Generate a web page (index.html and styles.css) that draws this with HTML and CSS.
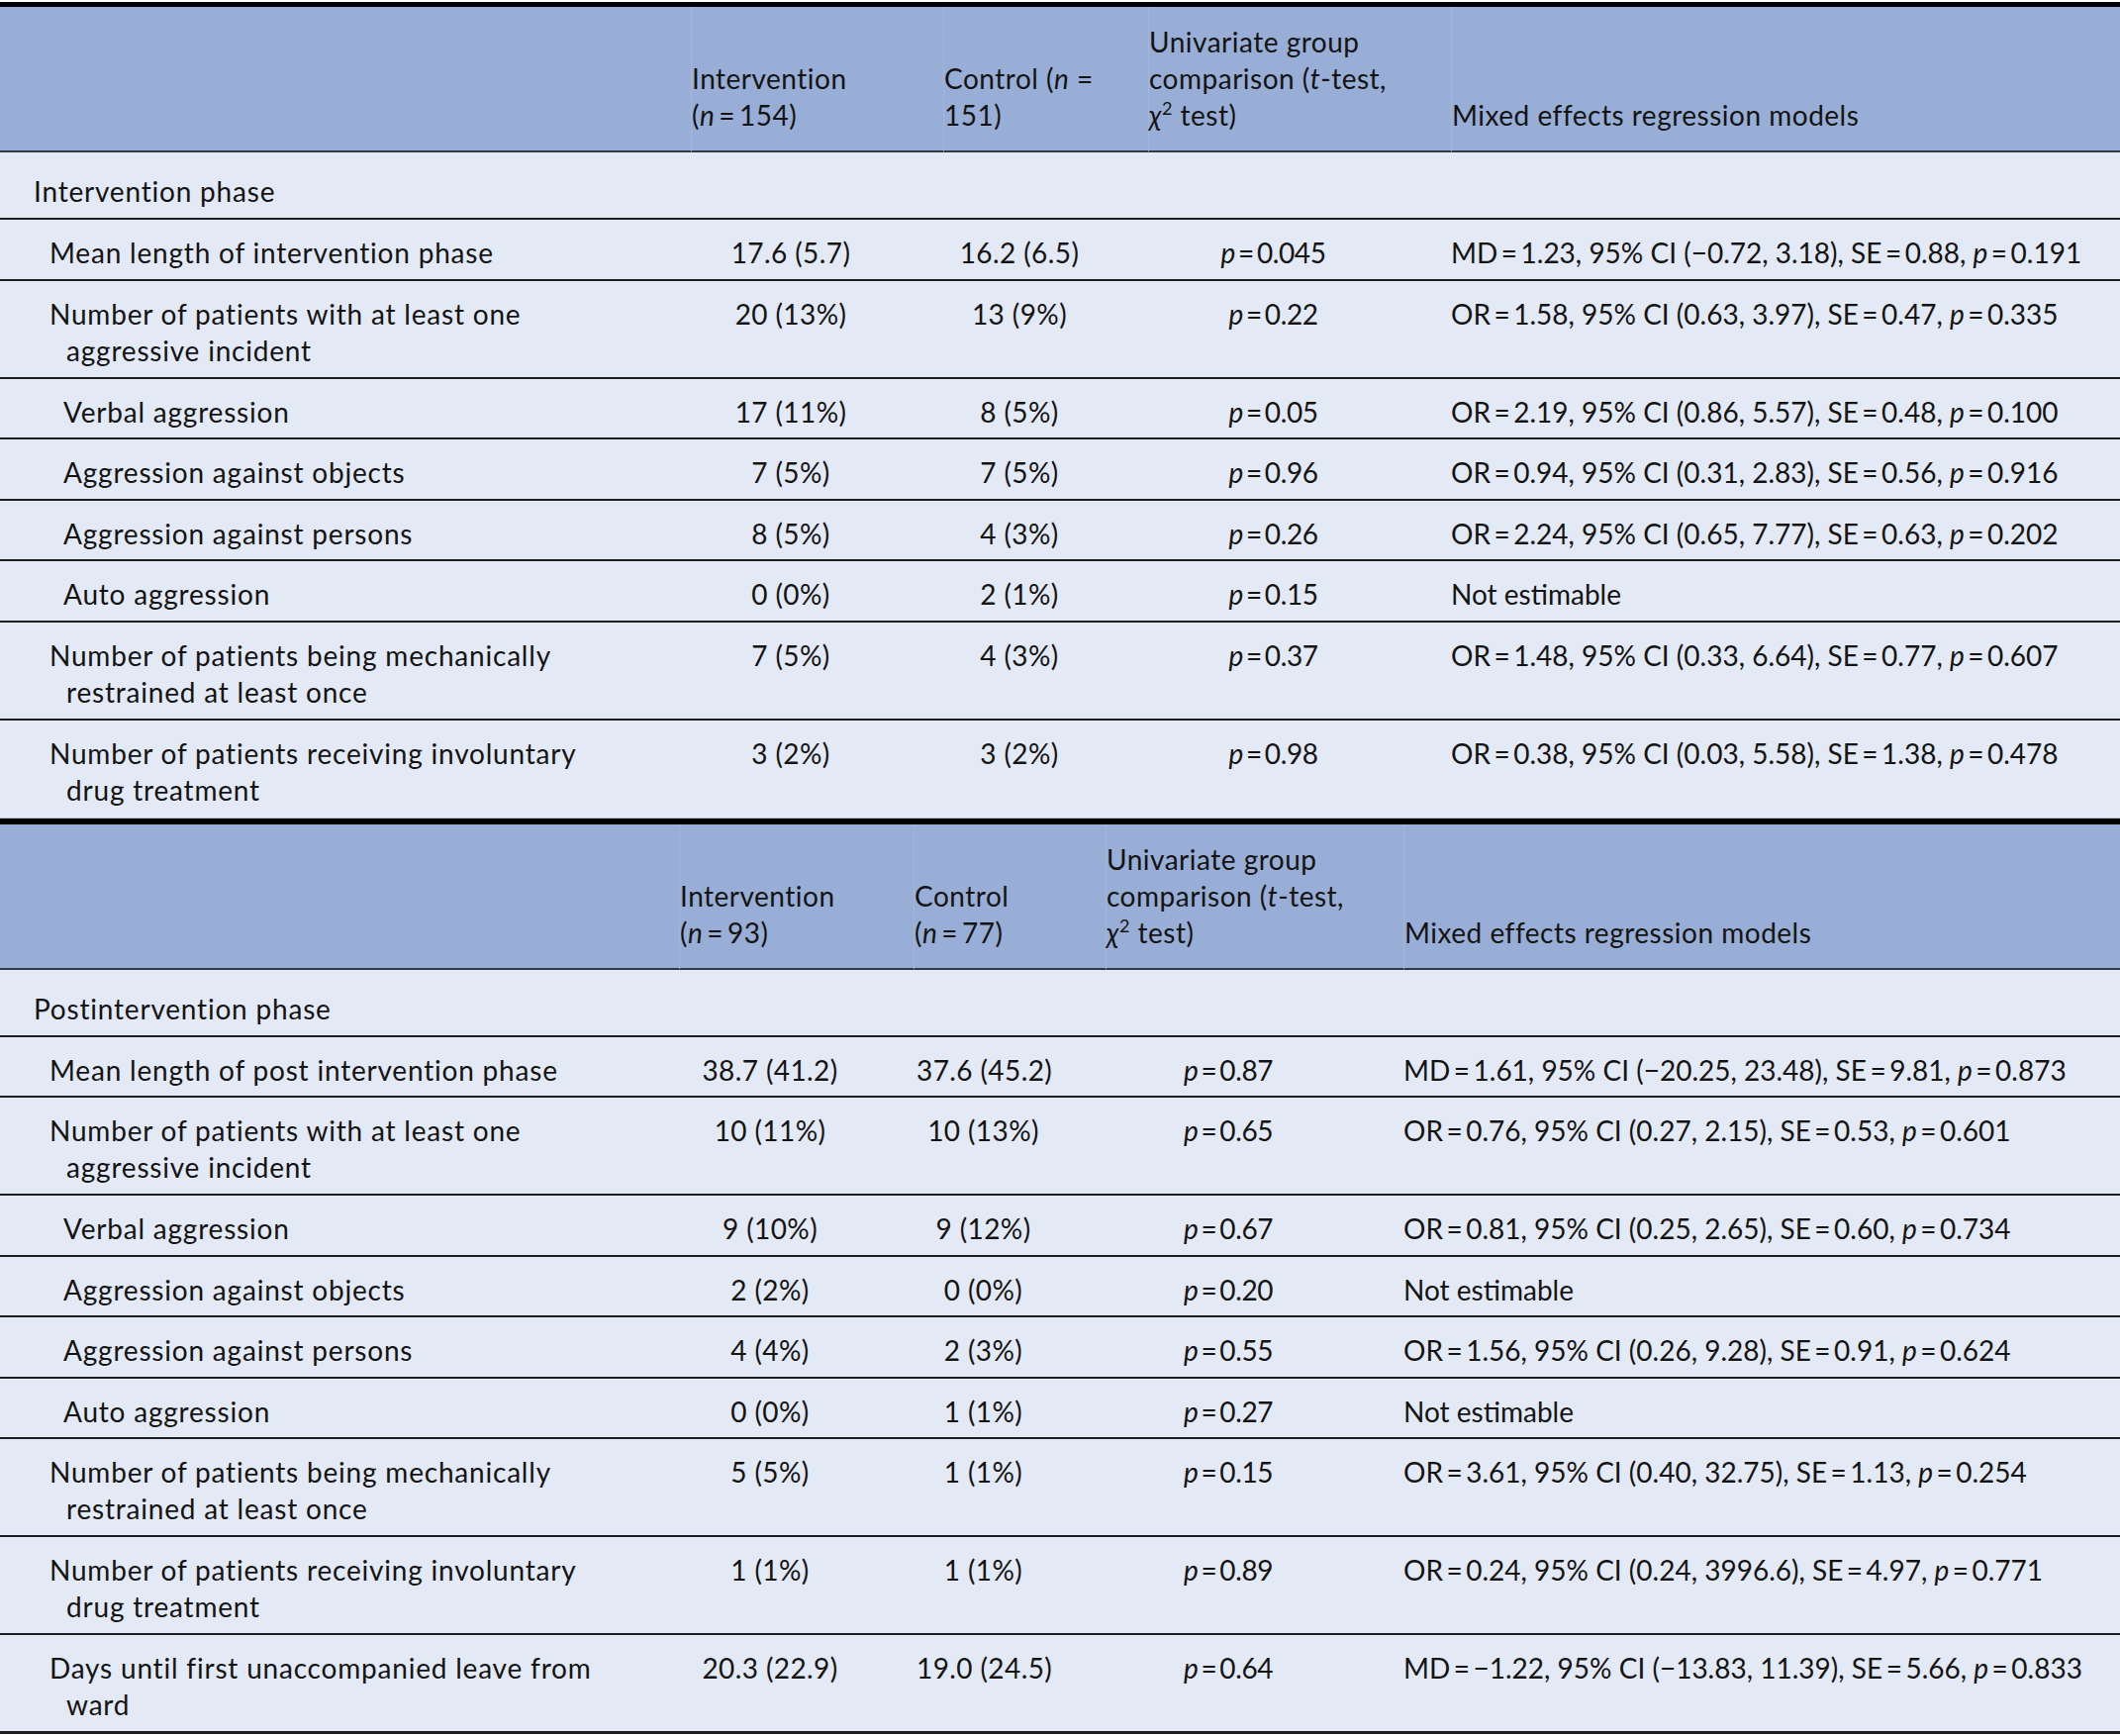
FILE: index.html
```html
<!DOCTYPE html>
<html>
<head>
<meta charset="utf-8">
<link rel="stylesheet" href="styles.css">
</head>
<body>
<div class="page">
<table class="results t1">
  <colgroup>
    <col class="c-label1"><col class="c-int1"><col class="c-ctl1"><col class="c-uni1"><col class="c-mix1">
  </colgroup>
  <thead>
    <tr>
      <th></th>
      <th>Intervention<br>(<i>n</i>&thinsp;=&thinsp;154)</th>
      <th>Control (<i>n</i> =<br>151)</th>
      <th>Univariate group<br>comparison (<i>t</i>-test,<br><i>χ</i><sup>2</sup> test)</th>
      <th>Mixed effects regression models</th>
    </tr>
  </thead>
  <tbody>
    <tr class="section"><td class="lab-sec">Intervention phase</td><td></td><td></td><td></td><td></td></tr>
    <tr><td class="lab">Mean length of intervention phase</td><td class="num">17.6 (5.7)</td><td class="num">16.2 (6.5)</td><td class="num pv"><i>p</i>&thinsp;=&thinsp;0.045</td><td class="mix">MD&thinsp;=&thinsp;1.23, 95% CI (−0.72, 3.18), SE&thinsp;=&thinsp;0.88, <i>p</i>&thinsp;=&thinsp;0.191</td></tr>
    <tr class="two"><td class="lab">Number of patients with at least one<br>aggressive incident</td><td class="num">20 (13%)</td><td class="num">13 (9%)</td><td class="num pv"><i>p</i>&thinsp;=&thinsp;0.22</td><td class="mix">OR&thinsp;=&thinsp;1.58, 95% CI (0.63, 3.97), SE&thinsp;=&thinsp;0.47, <i>p</i>&thinsp;=&thinsp;0.335</td></tr>
    <tr><td class="lab-sub">Verbal aggression</td><td class="num">17 (11%)</td><td class="num">8 (5%)</td><td class="num pv"><i>p</i>&thinsp;=&thinsp;0.05</td><td class="mix">OR&thinsp;=&thinsp;2.19, 95% CI (0.86, 5.57), SE&thinsp;=&thinsp;0.48, <i>p</i>&thinsp;=&thinsp;0.100</td></tr>
    <tr><td class="lab-sub">Aggression against objects</td><td class="num">7 (5%)</td><td class="num">7 (5%)</td><td class="num pv"><i>p</i>&thinsp;=&thinsp;0.96</td><td class="mix">OR&thinsp;=&thinsp;0.94, 95% CI (0.31, 2.83), SE&thinsp;=&thinsp;0.56, <i>p</i>&thinsp;=&thinsp;0.916</td></tr>
    <tr><td class="lab-sub">Aggression against persons</td><td class="num">8 (5%)</td><td class="num">4 (3%)</td><td class="num pv"><i>p</i>&thinsp;=&thinsp;0.26</td><td class="mix">OR&thinsp;=&thinsp;2.24, 95% CI (0.65, 7.77), SE&thinsp;=&thinsp;0.63, <i>p</i>&thinsp;=&thinsp;0.202</td></tr>
    <tr><td class="lab-sub">Auto aggression</td><td class="num">0 (0%)</td><td class="num">2 (1%)</td><td class="num pv"><i>p</i>&thinsp;=&thinsp;0.15</td><td class="mix">Not estimable</td></tr>
    <tr class="two"><td class="lab">Number of patients being mechanically<br>restrained at least once</td><td class="num">7 (5%)</td><td class="num">4 (3%)</td><td class="num pv"><i>p</i>&thinsp;=&thinsp;0.37</td><td class="mix">OR&thinsp;=&thinsp;1.48, 95% CI (0.33, 6.64), SE&thinsp;=&thinsp;0.77, <i>p</i>&thinsp;=&thinsp;0.607</td></tr>
    <tr class="two last"><td class="lab">Number of patients receiving involuntary<br>drug treatment</td><td class="num">3 (2%)</td><td class="num">3 (2%)</td><td class="num pv"><i>p</i>&thinsp;=&thinsp;0.98</td><td class="mix">OR&thinsp;=&thinsp;0.38, 95% CI (0.03, 5.58), SE&thinsp;=&thinsp;1.38, <i>p</i>&thinsp;=&thinsp;0.478</td></tr>
  </tbody>
</table>
<table class="results t2">
  <colgroup>
    <col class="c-label2"><col class="c-int2"><col class="c-ctl2"><col class="c-uni2"><col class="c-mix2">
  </colgroup>
  <thead>
    <tr>
      <th></th>
      <th>Intervention<br>(<i>n</i>&thinsp;=&thinsp;93)</th>
      <th>Control<br>(<i>n</i>&thinsp;=&thinsp;77)</th>
      <th>Univariate group<br>comparison (<i>t</i>-test,<br><i>χ</i><sup>2</sup> test)</th>
      <th>Mixed effects regression models</th>
    </tr>
  </thead>
  <tbody>
    <tr class="section"><td class="lab-sec">Postintervention phase</td><td></td><td></td><td></td><td></td></tr>
    <tr><td class="lab">Mean length of post intervention phase</td><td class="num">38.7 (41.2)</td><td class="num">37.6 (45.2)</td><td class="num pv"><i>p</i>&thinsp;=&thinsp;0.87</td><td class="mix">MD&thinsp;=&thinsp;1.61, 95% CI (−20.25, 23.48), SE&thinsp;=&thinsp;9.81, <i>p</i>&thinsp;=&thinsp;0.873</td></tr>
    <tr class="two"><td class="lab">Number of patients with at least one<br>aggressive incident</td><td class="num">10 (11%)</td><td class="num">10 (13%)</td><td class="num pv"><i>p</i>&thinsp;=&thinsp;0.65</td><td class="mix">OR&thinsp;=&thinsp;0.76, 95% CI (0.27, 2.15), SE&thinsp;=&thinsp;0.53, <i>p</i>&thinsp;=&thinsp;0.601</td></tr>
    <tr><td class="lab-sub">Verbal aggression</td><td class="num">9 (10%)</td><td class="num">9 (12%)</td><td class="num pv"><i>p</i>&thinsp;=&thinsp;0.67</td><td class="mix">OR&thinsp;=&thinsp;0.81, 95% CI (0.25, 2.65), SE&thinsp;=&thinsp;0.60, <i>p</i>&thinsp;=&thinsp;0.734</td></tr>
    <tr><td class="lab-sub">Aggression against objects</td><td class="num">2 (2%)</td><td class="num">0 (0%)</td><td class="num pv"><i>p</i>&thinsp;=&thinsp;0.20</td><td class="mix">Not estimable</td></tr>
    <tr><td class="lab-sub">Aggression against persons</td><td class="num">4 (4%)</td><td class="num">2 (3%)</td><td class="num pv"><i>p</i>&thinsp;=&thinsp;0.55</td><td class="mix">OR&thinsp;=&thinsp;1.56, 95% CI (0.26, 9.28), SE&thinsp;=&thinsp;0.91, <i>p</i>&thinsp;=&thinsp;0.624</td></tr>
    <tr><td class="lab-sub">Auto aggression</td><td class="num">0 (0%)</td><td class="num">1 (1%)</td><td class="num pv"><i>p</i>&thinsp;=&thinsp;0.27</td><td class="mix">Not estimable</td></tr>
    <tr class="two"><td class="lab">Number of patients being mechanically<br>restrained at least once</td><td class="num">5 (5%)</td><td class="num">1 (1%)</td><td class="num pv"><i>p</i>&thinsp;=&thinsp;0.15</td><td class="mix">OR&thinsp;=&thinsp;3.61, 95% CI (0.40, 32.75), SE&thinsp;=&thinsp;1.13, <i>p</i>&thinsp;=&thinsp;0.254</td></tr>
    <tr class="two"><td class="lab">Number of patients receiving involuntary<br>drug treatment</td><td class="num">1 (1%)</td><td class="num">1 (1%)</td><td class="num pv"><i>p</i>&thinsp;=&thinsp;0.89</td><td class="mix">OR&thinsp;=&thinsp;0.24, 95% CI (0.24, 3996.6), SE&thinsp;=&thinsp;4.97, <i>p</i>&thinsp;=&thinsp;0.771</td></tr>
    <tr class="two final"><td class="lab">Days until first unaccompanied leave from<br>ward</td><td class="num">20.3 (22.9)</td><td class="num">19.0 (24.5)</td><td class="num pv"><i>p</i>&thinsp;=&thinsp;0.64</td><td class="mix">MD&thinsp;=&thinsp;−1.22, 95% CI (−13.83, 11.39), SE&thinsp;=&thinsp;5.66, <i>p</i>&thinsp;=&thinsp;0.833</td></tr>
  </tbody>
</table>
</div>
</body>
</html>
```

FILE: styles.css
```css
html, body {
  margin: 0;
  padding: 0;
  background: #ffffff;
}
.page {
  padding-top: 2px;
  width: 2142px;
}
.results {
  width: 2142px;
  table-layout: fixed;
  border-collapse: separate;
  border-spacing: 0;
  font-family: Lato, "Noto Sans", sans-serif;
  font-size: 28px;
  line-height: 37px;
  color: #141414;
  background: #e3e9f5;
}
.t1 { border-top: 5px solid #000; }
.t2 { border-top: 6px solid #000; }

.c-label1 { width: 698px; }
.c-int1 { width: 255px; }
.c-ctl1 { width: 207px; }
.c-uni1 { width: 306px; }
.c-mix1 { width: 676px; }
.c-label2 { width: 686px; }
.c-int2 { width: 237px; }
.c-ctl2 { width: 194px; }
.c-uni2 { width: 301px; }
.c-mix2 { width: 724px; }

.results th {
  background: #98aed6;
  font-weight: normal;
  text-align: left;
  vertical-align: bottom;
  white-space: nowrap;
  letter-spacing: 0.5px;
  padding: 17px 4px 17px 0;
  border-bottom: 2px solid #2f3947;
  border-left: 1px solid #a3b7dd;
}
.results th:first-child { border-left: none; }
.results sup {
  font-size: 18px;
  line-height: 0;
  vertical-align: 11px;
}
.results td {
  vertical-align: top;
  white-space: nowrap;
  padding: 15px 4px 7.5px 0;
  border-bottom: 2px solid #1d1d1d;
}
.results tr.two td { padding-bottom: 8px; }
.results tr.section td {
  padding-top: 21px;
  padding-bottom: 8px;
}
.results tr.last td { border-bottom: 1px solid #b9c1cf; padding-bottom: 9px; }
.results tr.final td { border-bottom: 3px solid #1d1d1d; }

.lab-sec { padding-left: 34px !important; letter-spacing: 0.8px; }
.lab { padding-left: 67px !important; text-indent: -17px; letter-spacing: 0.8px; }
.lab-sub { padding-left: 64px !important; letter-spacing: 0.8px; }
.num { text-align: center; letter-spacing: 0.4px; padding-left: 3px !important; padding-right: 56px !important; }
.pv { letter-spacing: -0.4px; }
.mix { text-align: left; letter-spacing: 0; }
```
